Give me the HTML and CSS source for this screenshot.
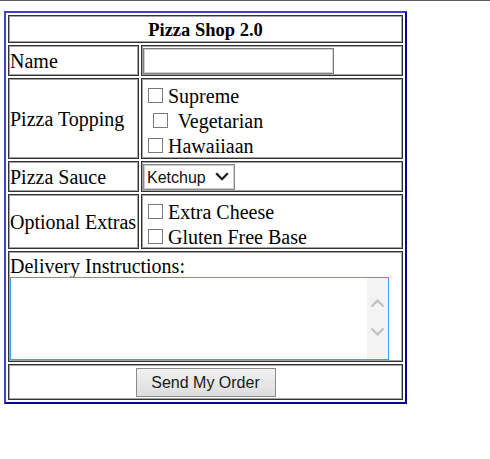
FILE: index.html
```html
<!DOCTYPE html>
<html>
<head>
<meta charset="utf-8">
<title>Pizza Shop 2.0</title>
<link rel="stylesheet" href="styles.css">
</head>
<body>
<div class="topline"></div>
<form class="order">
<table class="shop">
  <colgroup><col class="c1"><col class="c2"></colgroup>
  <tr><th colspan="2" class="title">Pizza Shop 2.0</th></tr>
  <tr>
    <td class="r-name lab">Name</td>
    <td class="r-name"><input type="text" class="txt"></td>
  </tr>
  <tr>
    <td class="r-top lab">Pizza Topping</td>
    <td class="r-top">
      <div class="opt"><input type="checkbox" class="cb">Supreme</div>
      <div class="opt">&nbsp;<input type="checkbox" class="cb"> Vegetarian</div>
      <div class="opt"><input type="checkbox" class="cb">Hawaiiaan</div>
    </td>
  </tr>
  <tr>
    <td class="r-sauce lab">Pizza Sauce</td>
    <td class="r-sauce">
      <div class="sel-wrap">
        <select class="sel"><option>Ketchup</option><option>BBQ</option></select>
        <svg class="sel-arrow" width="14" height="9" viewBox="0 0 14 9"><path d="M1.2 1.3 L7 7.2 L12.8 1.3" fill="none" stroke="#1e1e1e" stroke-width="2.3"/></svg>
      </div>
    </td>
  </tr>
  <tr>
    <td class="r-extra lab">Optional Extras</td>
    <td class="r-extra">
      <div class="opt"><input type="checkbox" class="cb">Extra Cheese</div>
      <div class="opt"><input type="checkbox" class="cb">Gluten Free Base</div>
    </td>
  </tr>
  <tr>
    <td colspan="2" class="r-deliv">
      <div class="lbl">Delivery Instructions:</div>
      <div class="ta-wrap">
        <textarea class="ta"></textarea>
        <div class="sbar">
          <svg width="15" height="9" viewBox="0 0 15 9"><path d="M1.5 7.5 L7.5 1.6 L13.5 7.5" fill="none" stroke="#c3c3c3" stroke-width="2.4"/></svg>
          <svg width="15" height="9" viewBox="0 0 15 9"><path d="M1.5 1.5 L7.5 7.4 L13.5 1.5" fill="none" stroke="#c3c3c3" stroke-width="2.4"/></svg>
        </div>
      </div>
    </td>
  </tr>
  <tr>
    <td colspan="2" class="r-btn"><button type="button" class="btn">Send My Order</button></td>
  </tr>
</table>
</form>
</body>
</html>
```
FILE: styles.css
```css
html, body {
  margin: 0;
  padding: 0;
  background: #fff;
}
body {
  font-family: "Liberation Serif", "Times New Roman", serif;
  font-size: 20px;
  color: #000;
}
.topline {
  height: 1px;
  background: #5b5b5b;
}
.order {
  margin: 0;
}
.shop {
  margin: 10px 0 0 4px;
  width: 403px;
  table-layout: fixed;
  border-collapse: separate;
  border-spacing: 2px;
  border: 2px solid;
  border-color: #4040cc #0a0a84 #0a0a84 #4040cc;
  font-size: 20px;
}
.c1 { width: 131px; }
.shop th, .shop td {
  box-sizing: border-box;
  border: 1px solid #333;
  padding: 1px;
  box-shadow: inset 0 0 0 1px #a3a3a3;
  text-align: left;
  vertical-align: middle;
  line-height: normal;
}
.shop th.title {
  height: 28px;
  padding: 2px 1px 0;
  text-align: center;
  font-weight: bold;
  font-size: 18.5px;
}
.shop td.lab {
  padding: 2px 1px 0;
}
.r-name { height: 31px; }
.r-top { height: 81px; }
.r-sauce { height: 31px; }
.r-extra { height: 55px; }
.r-deliv { height: 111px; }
.shop td.r-btn { height: 36px; text-align: center; }

.txt {
  display: block;
  box-sizing: border-box;
  width: 191px;
  height: 26px;
  margin: 0;
  padding: 0 3px;
  border: 1px solid #7e7e7e;
  box-shadow: inset 0 0 0 1px #cfcfcf;
  background: #fff;
  font-family: "Liberation Sans", Arial, sans-serif;
  font-size: 16px;
  outline: none;
}

.opt {
  box-sizing: border-box;
  height: 25px;
  padding-top: 5px;
  line-height: 20px;
  white-space: nowrap;
}
.cb {
  -webkit-appearance: none;
  appearance: none;
  box-sizing: border-box;
  width: 15px;
  height: 15px;
  margin: 0 5px 0 5px;
  border: 1px solid #7a7a7a;
  background: #fff;
  vertical-align: baseline;
}

.sel-wrap {
  position: relative;
  width: 92px;
  height: 26px;
}
.sel {
  -webkit-appearance: none;
  appearance: none;
  display: block;
  box-sizing: border-box;
  width: 92px;
  height: 26px;
  margin: 0;
  padding: 1px 0 0 3px;
  border: 1px solid #8c8c8c;
  box-shadow: inset 0 0 0 1px #c9c9c9;
  border-radius: 0;
  background: #fff;
  color: #111;
  font-family: "Liberation Sans", Arial, sans-serif;
  font-size: 16px;
  outline: none;
}
.sel-arrow {
  position: absolute;
  left: 72px;
  top: 8px;
  pointer-events: none;
}

.lbl {
  box-sizing: border-box;
  height: 24px;
  padding-top: 2px;
  line-height: 22px;
}
.ta-wrap {
  position: relative;
  width: 379px;
  height: 83px;
}
.ta {
  display: block;
  box-sizing: border-box;
  width: 379px;
  height: 83px;
  margin: 0;
  padding: 2px;
  border: 1px solid #3ba4e3;
  resize: none;
  overflow: hidden;
  outline: none;
  background: #fff;
  font-family: "Liberation Sans", Arial, sans-serif;
  font-size: 14px;
}
.sbar {
  position: absolute;
  right: 1px;
  top: 1px;
  bottom: 1px;
  width: 21px;
  background: #f3f3f3;
  display: flex;
  flex-direction: column;
  align-items: center;
  padding-top: 21px;
  gap: 19px;
  box-sizing: border-box;
}
.sbar svg { display: block; }

.btn {
  display: block;
  margin: 0 auto;
  box-sizing: border-box;
  width: 140px;
  height: 29px;
  padding: 1px 0 0;
  border: 1px solid #8a8a8a;
  border-radius: 0;
  background: linear-gradient(#f1f1f1, #dddddd);
  color: #1a1a1a;
  font-family: "Liberation Sans", Arial, sans-serif;
  font-size: 16px;
}
```
